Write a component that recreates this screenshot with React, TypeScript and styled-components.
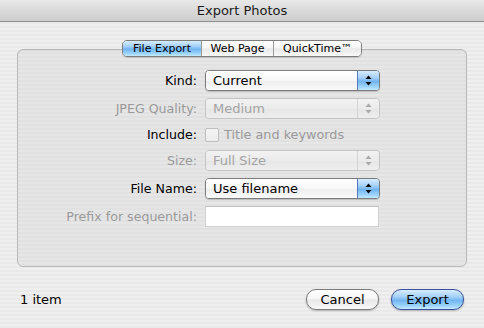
import * as React from 'react'
import styled, { createGlobalStyle, css } from 'styled-components'

const GlobalStyle = createGlobalStyle`
  html, body {
    margin: 0;
    padding: 0;
  }
  body {
    font-family: "DejaVu Sans", "Liberation Sans", sans-serif;
    font-size: 12px;
    color: #000;
  }
  *, *::before, *::after {
    box-sizing: border-box;
  }
`

const pinstripe = (a: string, b: string) => css`
  background: repeating-linear-gradient(to bottom, ${a} 0px, ${a} 2px, ${b} 2px, ${b} 4px);
`

const aquaBlue = css`
  background: linear-gradient(
    to bottom,
    #d6ecff 0%,
    #a6d1f7 35%,
    #7dbbf2 50%,
    #6cb2f0 52%,
    #9fd6fc 85%,
    #c4ebff 100%
  );
`

const glassWhite = css`
  background: linear-gradient(
    to bottom,
    #ffffff 0%,
    #f6f6f6 45%,
    #e9e9e9 52%,
    #f1f1f1 80%,
    #fbfbfb 100%
  );
`

const Window = styled.div`
  width: 484px;
  height: 328px;
  display: flex;
  flex-direction: column;
  overflow: hidden;
  ${pinstripe('#efefef', '#e9e9e9')}
`

const TitleBar = styled.div`
  height: 22px;
  border-bottom: 1px solid #8e8e8e;
  background: linear-gradient(to bottom, #e9e9e9 0%, #dadada 50%, #cdcdcd 100%);
  display: flex;
  align-items: center;
  justify-content: center;
  font-size: 13px;
  color: #1a1a1a;
`

const Body = styled.div`
  padding: 18px 17px 0 17px;
  display: flex;
  flex-direction: column;
`

const TabRow = styled.div`
  display: flex;
  justify-content: center;
  position: relative;
  z-index: 1;
`

const TabGroup = styled.div`
  display: flex;
  height: 17px;
  border: 1px solid #7d7d7d;
  border-radius: 5px;
  overflow: hidden;
  box-shadow: 0 1px 1px rgba(0, 0, 0, 0.15);
`

const Tab = styled.div<{ $w: number; $active?: boolean }>`
  width: ${(p) => p.$w}px;
  display: flex;
  align-items: center;
  justify-content: center;
  font-size: 11px;
  line-height: 15px;
  & + & {
    border-left: 1px solid #9a9a9a;
  }
  ${(p) => (p.$active ? aquaBlue : glassWhite)}
`

const TabBox = styled.div`
  margin-top: -8px;
  height: 218px;
  border: 1px solid #b9b9b9;
  border-radius: 6px;
  box-shadow: inset 0 1px 1px rgba(0, 0, 0, 0.06);
  ${pinstripe('#e6e6e6', '#e1e1e1')}
  padding-top: 20px;
  display: flex;
  flex-direction: column;
  gap: 7px;
`

const Row = styled.div<{ $h?: number }>`
  display: flex;
  align-items: center;
  height: ${(p) => p.$h ?? 21}px;
`

const Label = styled.div<{ $dim?: boolean }>`
  width: 187px;
  text-align: right;
  padding-right: 8px;
  font-size: 12.6px;
  color: ${(p) => (p.$dim ? '#9a9a9a' : '#000')};
  white-space: nowrap;
`

const Popup = styled.div<{ $disabled?: boolean }>`
  width: 175px;
  height: 21px;
  display: flex;
  border: 1px solid ${(p) => (p.$disabled ? '#c3c3c3' : '#7b7b7b')};
  border-radius: 4px;
  overflow: hidden;
  box-shadow: ${(p) => (p.$disabled ? 'none' : '0 1px 1px rgba(0,0,0,0.18)')};
`

const PopupText = styled.div<{ $disabled?: boolean }>`
  flex: 1;
  padding-left: 7px;
  display: flex;
  align-items: center;
  font-size: 13px;
  color: ${(p) => (p.$disabled ? '#a3a3a3' : '#000')};
  background: ${(p) =>
    p.$disabled
      ? 'linear-gradient(to bottom, #f2f2f2, #ebebeb 50%, #e6e6e6 52%, #eeeeee)'
      : 'linear-gradient(to bottom, #ffffff, #f7f7f7 50%, #ededed 52%, #fafafa)'};
`

const PopupArrows = styled.div<{ $disabled?: boolean }>`
  width: 22px;
  display: flex;
  align-items: center;
  justify-content: center;
  ${(p) =>
    p.$disabled
      ? css`
          border-left: 1px solid #d3d3d3;
          background: linear-gradient(to bottom, #f2f2f2, #ebebeb 50%, #e6e6e6 52%, #eeeeee);
        `
      : css`
          border-left: 1px solid #5878b8;
          ${aquaBlue}
        `}
`

const CheckRow = styled.label`
  display: flex;
  align-items: center;
  gap: 5px;
  color: #9a9a9a;
  font-size: 12.8px;
`

const CheckBox = styled.span`
  width: 14px;
  height: 14px;
  border: 1px solid #bdbdbd;
  border-radius: 2px;
  background: linear-gradient(to bottom, #f4f4f4, #ececec);
`

const TextField = styled.div`
  width: 174px;
  height: 21px;
  background: #fff;
  border: 1px solid #d0d0d0;
  border-top-color: #c0c0c0;
`

const Footer = styled.div`
  margin-top: 22px;
  padding: 0 3px;
  display: flex;
  align-items: center;
  font-size: 13px;
`

const Count = styled.div`
  flex: 1;
`

const Buttons = styled.div`
  display: flex;
  gap: 12px;
`

const PushButton = styled.div<{ $default?: boolean }>`
  width: 73px;
  height: 21px;
  border-radius: 10px;
  display: flex;
  align-items: center;
  justify-content: center;
  font-size: 13px;
  box-shadow: 0 1px 2px rgba(0, 0, 0, 0.25);
  ${(p) =>
    p.$default
      ? css`
          border: 1px solid #3b4f9c;
          ${aquaBlue}
        `
      : css`
          border: 1px solid #7a7a7a;
          ${glassWhite}
        `}
`

function Arrows({ disabled }: { disabled?: boolean }) {
  const c = disabled ? '#a9a9a9' : '#0a0a0a'
  return (
    <svg width="7" height="11" viewBox="0 0 7 11">
      <path d="M3.5 0.5 L6.5 4 L0.5 4 Z" fill={c} />
      <path d="M3.5 10.5 L6.5 7 L0.5 7 Z" fill={c} />
    </svg>
  )
}

function Select({ value, disabled }: { value: string; disabled?: boolean }) {
  return (
    <Popup $disabled={disabled}>
      <PopupText $disabled={disabled}>{value}</PopupText>
      <PopupArrows $disabled={disabled}>
        <Arrows disabled={disabled} />
      </PopupArrows>
    </Popup>
  )
}

export default function App() {
  return (
    <>
      <GlobalStyle />
      <Window>
        <TitleBar>Export Photos</TitleBar>
        <Body>
          <TabRow>
            <TabGroup>
              <Tab $w={78} $active>
                File Export
              </Tab>
              <Tab $w={72}>Web Page</Tab>
              <Tab $w={88}>QuickTime™</Tab>
            </TabGroup>
          </TabRow>
          <TabBox>
            <Row>
              <Label>Kind:</Label>
              <Select value="Current" />
            </Row>
            <Row>
              <Label $dim>JPEG Quality:</Label>
              <Select value="Medium" disabled />
            </Row>
            <Row $h={17}>
              <Label>Include:</Label>
              <CheckRow>
                <CheckBox />
                Title and keywords
              </CheckRow>
            </Row>
            <Row>
              <Label $dim>Size:</Label>
              <Select value="Full Size" disabled />
            </Row>
            <Row>
              <Label>File Name:</Label>
              <Select value="Use filename" />
            </Row>
            <Row>
              <Label $dim>Prefix for sequential:</Label>
              <TextField />
            </Row>
          </TabBox>
          <Footer>
            <Count>1 item</Count>
            <Buttons>
              <PushButton>Cancel</PushButton>
              <PushButton $default>Export</PushButton>
            </Buttons>
          </Footer>
        </Body>
      </Window>
    </>
  )
}
